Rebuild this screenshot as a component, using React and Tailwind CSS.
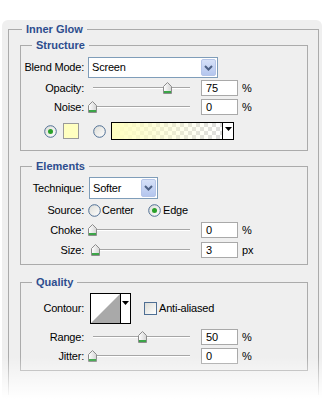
import React from "react";

const Label = ({ children }) => (
  <span className="w-[63px] shrink-0 text-right">{children}</span>
);

const Thumb = () => (
  <svg width="9" height="12" viewBox="0 0 9 12">
    <defs>
      <linearGradient id="th" x1="0" y1="0" x2="1" y2="0">
        <stop offset="0" stopColor="#ffffff" />
        <stop offset="1" stopColor="#d4d4d4" />
      </linearGradient>
    </defs>
    <path d="M0.5 4.5 L4.5 0.5 L8.5 4.5 L8.5 11.5 L0.5 11.5 Z" fill="url(#th)" stroke="#8c8c8c" />
    <rect x="1" y="9" width="7" height="2" fill="#3ca548" />
  </svg>
);

const Slider = ({ pos }) => (
  <div className="relative ml-[4px] h-[16px] w-[107px] shrink-0">
    <div className="absolute left-[5px] right-[5px] top-[7px] h-[2px] border-t border-[#a6a6a6] border-b border-b-white" />
    <div className="absolute top-[2px]" style={{ left: pos }}>
      <Thumb />
    </div>
  </div>
);

const NumBox = ({ value, unit }) => (
  <>
    <div className="ml-[6px] flex h-[16px] w-[37px] shrink-0 items-center border border-[#a9a9a9] bg-white pl-[4px] leading-none">
      {value}
    </div>
    <span className="ml-[4px]">{unit}</span>
  </>
);

const SliderRow = ({ label, pos, value, unit = "%", className = "" }) => (
  <div className={`flex h-[16px] items-center ${className}`}>
    <Label>{label}</Label>
    <Slider pos={pos} />
    <NumBox value={value} unit={unit} />
  </div>
);

const Chevron = () => (
  <svg width="9" height="6" viewBox="0 0 9 6">
    <path d="M1 1 L4.5 4.5 L8 1" fill="none" stroke="#4d6185" strokeWidth="2" />
  </svg>
);

const Select = ({ value, width }) => (
  <div className={`flex h-full items-center border border-[#7f9db9] bg-white ${width}`}>
    <span className="flex-1 pl-[3px]">{value}</span>
    <div className="mr-[1px] flex h-[calc(100%-2px)] w-[15px] items-center justify-center rounded-[2px] border border-[#b5c5e8] bg-gradient-to-b from-[#d6e1f8] to-[#b4c6ee]">
      <Chevron />
    </div>
  </div>
);

const Radio = ({ checked }) => (
  <svg width="13" height="13" viewBox="0 0 13 13" className="block shrink-0">
    <defs>
      <linearGradient id="rd" x1="0" y1="0" x2="1" y2="1">
        <stop offset="0" stopColor="#dcdcd6" />
        <stop offset="1" stopColor="#ffffff" />
      </linearGradient>
    </defs>
    <circle cx="6.5" cy="6.5" r="5.8" fill="url(#rd)" stroke="#4f6f94" strokeWidth="1" />
    {checked && <circle cx="6.5" cy="6.5" r="2.5" fill="#2aa12a" />}
  </svg>
);

const DropTri = () => (
  <svg width="7" height="4" viewBox="0 0 7 4" className="block">
    <path d="M0 0 H7 L3.5 4 Z" fill="#000" />
  </svg>
);

const Section = ({ title, className = "", children }) => (
  <fieldset className={`ml-[11px] w-[288px] border border-[#ababab] ${className}`}>
    <legend className="ml-[11px] px-[4px] text-[11px] font-bold leading-[14px] tracking-normal text-[#2d4d8e]">
      {title}
    </legend>
    {children}
  </fieldset>
);

export default function App() {
  return (
    <div className="h-[415px] w-[327px] overflow-hidden bg-white font-['Liberation_Sans',Arial,sans-serif] text-[11px] tracking-[-0.2px] text-black">
      <div className="relative ml-[2px] mt-[20px] h-[395px] w-[320px] rounded-t-[6px] bg-[#efefef] pt-[2px]">
        <fieldset className="ml-[6px] w-[311px] border border-b-0 border-[#ababab] pb-[24px]">
          <legend className="ml-[13px] px-[4px] text-[11px] font-bold leading-[14px] tracking-normal text-[#2d4d8e]">
            Inner Glow
          </legend>

          <Section title="Structure" className="mt-[2px] pb-[10px]">
            <div className="mt-[5px] flex h-[21px] items-center">
              <Label>Blend Mode:</Label>
              <div className="ml-[4px] h-full">
                <Select value="Screen" width="w-[130px]" />
              </div>
            </div>
            <SliderRow label="Opacity:" pos={75} value="75" className="mt-[2px]" />
            <SliderRow label="Noise:" pos={0} value="0" className="mt-[3px]" />
            <div className="mt-[7px] grid h-[18px] grid-cols-[23px_13px_6px_16px_14px_13px_5px_123px] items-center">
              <span />
              <Radio checked />
              <span />
              <div className="h-[16px] w-[16px] border border-[#9a9a9a] bg-[#ffffc0]" />
              <span />
              <Radio />
              <span />
              <div className="grid h-[18px] w-[123px] max-w-[123px] grid-cols-[1fr_11px] border border-black">
                <div className="h-full bg-[linear-gradient(to_right,#ffffc0,rgba(255,255,192,0.2)_75%,rgba(255,255,255,0)),repeating-conic-gradient(#dedede_0%_25%,#ffffff_0%_50%)] [background-size:100%_100%,8px_8px]" />
                <div className="flex h-full justify-center border-l border-black bg-white pt-[4px]">
                  <DropTri />
                </div>
              </div>
            </div>
          </Section>

          <Section title="Elements" className="mt-[8px] pb-[6px]">
            <div className="mt-[4px] flex h-[22px] items-center">
              <Label>Technique:</Label>
              <div className="ml-[5px] h-full">
                <Select value="Softer" width="w-[69px]" />
              </div>
            </div>
            <div className="mt-[5px] flex h-[13px] items-center">
              <Label>Source:</Label>
              <div className="ml-[4px]">
                <Radio />
              </div>
              <span className="ml-[1px] w-[46px]">Center</span>
              <Radio checked />
              <span className="ml-[2px]">Edge</span>
            </div>
            <SliderRow label="Choke:" pos={0} value="0" className="mt-[5px]" />
            <SliderRow label="Size:" pos={3} value="3" unit="px" className="mt-[4px]" />
          </Section>

          <Section title="Quality" className="mt-[10px] pb-[6px]">
            <div className="mt-[4px] flex h-[31px] items-center">
              <Label>Contour:</Label>
              <div className="ml-[6px] flex h-[31px] w-[41px] border border-black bg-white">
                <svg width="29" height="29" viewBox="0 0 29 29" className="block shrink-0">
                  <path d="M0 29 L29 0 L29 29 Z" fill="#a9a9a9" />
                </svg>
                <div className="flex flex-1 justify-center border-l border-black pt-[7px]">
                  <DropTri />
                </div>
              </div>
              <div className="ml-[13px] h-[13px] w-[13px] border border-[#4f6f94] bg-gradient-to-br from-[#dcdcd6] to-white" />
              <span className="ml-[2px]">Anti-aliased</span>
            </div>
            <SliderRow label="Range:" pos={50} value="50" className="mt-[5px]" />
            <SliderRow label="Jitter:" pos={0} value="0" className="mt-[3px]" />
          </Section>
        </fieldset>

        <div className="pointer-events-none absolute inset-x-0 bottom-0 h-[58px] bg-[linear-gradient(to_bottom,rgba(255,255,255,0),#ffffff_72%)]" />
      </div>
    </div>
  );
}
